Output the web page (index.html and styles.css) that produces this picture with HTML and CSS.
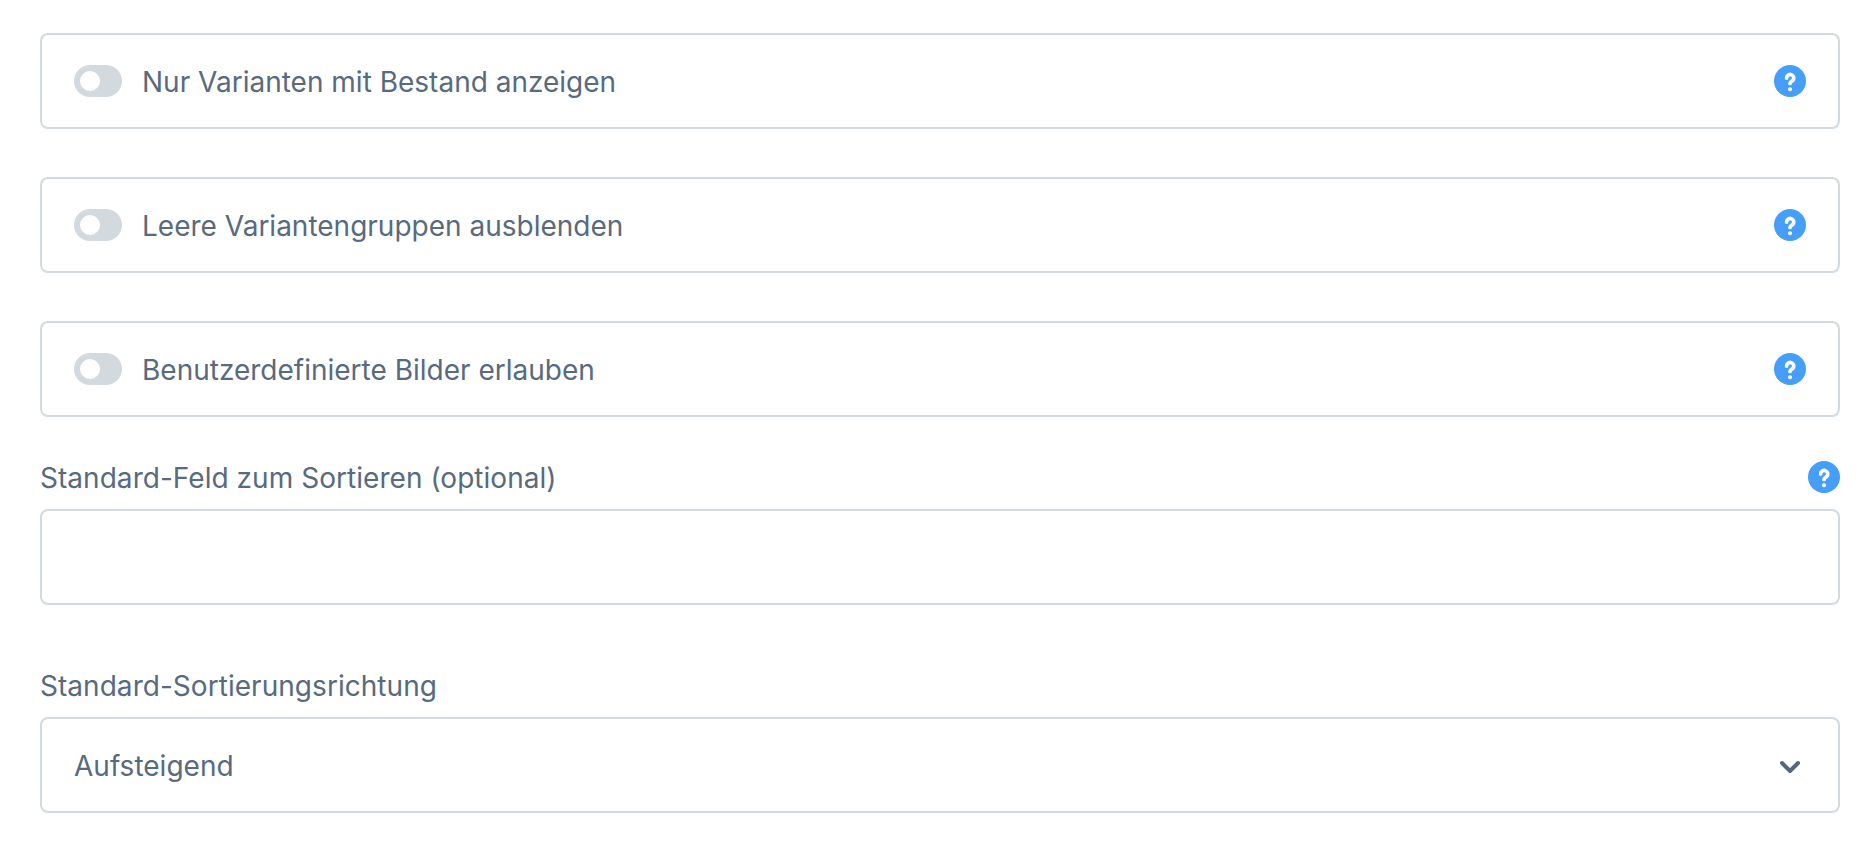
FILE: index.html
```
<!DOCTYPE html>
<html lang="de">
<head>
<meta charset="utf-8">
<title>Varianten</title>
<link rel="stylesheet" href="styles.css">
</head>
<body>
<svg class="defs" width="0" height="0">
  <symbol id="help" viewBox="0 0 32 32">
    <circle cx="16" cy="16" r="16" fill="#469efb"/>
    <path d="M12.6 13.1a3.6 3.5 0 1 1 5.9 2.6c-1.3 1.1-2.5 1.4-2.5 2.7" fill="none" stroke="#fff" stroke-width="3.7" stroke-linecap="round" stroke-linejoin="round"/>
    <circle cx="16" cy="24.2" r="2" fill="#fff"/>
  </symbol>
</svg>
<main class="form">
  <div class="box switch"><span class="toggle"></span><span class="text">Nur Varianten mit Bestand anzeigen</span><svg class="help"><use href="#help"/></svg></div>
  <div class="box switch"><span class="toggle"></span><span class="text">Leere Variantengruppen ausblenden</span><svg class="help"><use href="#help"/></svg></div>
  <div class="box switch"><span class="toggle"></span><span class="text">Benutzerdefinierte Bilder erlauben</span><svg class="help"><use href="#help"/></svg></div>
  <div class="field">
    <div class="label"><span class="text">Standard-Feld zum Sortieren (optional)</span><svg class="help"><use href="#help"/></svg></div>
    <div class="box"></div>
  </div>
  <div class="field field-select">
    <div class="label"><span class="text">Standard-Sortierungsrichtung</span></div>
    <div class="box"><span class="text">Aufsteigend</span><svg class="chevron" viewBox="0 0 32 32"><path d="M8 14l8 8 8-8" fill="none" stroke="#56687b" stroke-width="4" stroke-linecap="round" stroke-linejoin="round"/></svg></div>
  </div>
</main>
</body>
</html>
```
FILE: styles.css
```
* { box-sizing: border-box; }
body { margin: 0; background: #fff; color: #586a7e; font: 28px/32px Inter, sans-serif; }
.defs { display: block; }
.form { padding: 33px 36px 0 40px; }
.box { display: flex; align-items: center; height: 96px; padding: 0 32px; border: 2px solid #d2d9df; border-radius: 8px; background: #fff; }
.switch { margin-bottom: 48px; }
.text { flex: 1; padding-top: 2px; white-space: nowrap; }
.toggle { width: 48px; height: 32px; margin-right: 20px; padding: 6px; border-radius: 16px; background: #d2d9df; }
.toggle::before { content: ""; display: block; width: 20px; height: 20px; border-radius: 50%; background: #fff; }
.help, .chevron { display: block; flex: none; width: 32px; height: 32px; }
.label { display: flex; align-items: center; height: 32px; margin-bottom: 16px; letter-spacing: 0.04px; }
.field { margin-top: -4px; }
.field-select { margin-top: 64px; }
```
